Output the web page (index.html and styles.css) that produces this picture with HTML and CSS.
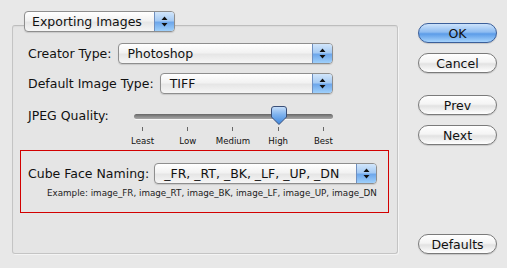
FILE: index.html
```html
<!DOCTYPE html>
<html>
<head>
<meta charset="UTF-8">
<title>Exporting Images</title>
<link rel="stylesheet" href="styles.css">
</head>
<body>
<div class="window">
  <div class="group">
    <div class="popup title-popup">
      <span class="popup-text">Exporting Images</span>
      <span class="popup-arrows"><svg width="7" height="11" viewBox="0 0 7 11"><path d="M3.5 0.5 L6.5 4 L0.5 4 Z M0.5 7 L6.5 7 L3.5 10.5 Z" fill="#111"/></svg></span>
    </div>

    <div class="row">
      <span class="label">Creator Type:</span>
      <div class="popup grow">
        <span class="popup-text">Photoshop</span>
        <span class="popup-arrows"><svg width="7" height="11" viewBox="0 0 7 11"><path d="M3.5 0.5 L6.5 4 L0.5 4 Z M0.5 7 L6.5 7 L3.5 10.5 Z" fill="#111"/></svg></span>
      </div>
    </div>

    <div class="row">
      <span class="label">Default Image Type:</span>
      <div class="popup grow">
        <span class="popup-text">TIFF</span>
        <span class="popup-arrows"><svg width="7" height="11" viewBox="0 0 7 11"><path d="M3.5 0.5 L6.5 4 L0.5 4 Z M0.5 7 L6.5 7 L3.5 10.5 Z" fill="#111"/></svg></span>
      </div>
    </div>

    <div class="slider-row">
      <span class="label">JPEG Quality:</span>
      <div class="slider">
        <div class="track"></div>
        <svg class="thumb" width="16" height="19" viewBox="0 0 16 19">
          <defs>
            <linearGradient id="tg" x1="0" y1="0" x2="0" y2="1">
              <stop offset="0" stop-color="#c9e0fa"/>
              <stop offset="0.45" stop-color="#7fb3ee"/>
              <stop offset="1" stop-color="#3f86dc"/>
            </linearGradient>
          </defs>
          <path d="M3 0.5 H13 Q15.5 0.5 15.5 3 V11 L8 18.5 L0.5 11 V3 Q0.5 0.5 3 0.5 Z" fill="url(#tg)" stroke="#3a4f78" stroke-width="1"/>
        </svg>
        <div class="ticks">
          <span class="tick"><i></i>Least</span>
          <span class="tick"><i></i>Low</span>
          <span class="tick"><i></i>Medium</span>
          <span class="tick"><i></i>High</span>
          <span class="tick"><i></i>Best</span>
        </div>
      </div>
    </div>

    <div class="highlight">
      <div class="row cube-row">
        <span class="label">Cube Face Naming:</span>
        <div class="popup grow">
          <span class="popup-text">_FR, _RT, _BK, _LF, _UP, _DN</span>
          <span class="popup-arrows"><svg width="7" height="11" viewBox="0 0 7 11"><path d="M3.5 0.5 L6.5 4 L0.5 4 Z M0.5 7 L6.5 7 L3.5 10.5 Z" fill="#111"/></svg></span>
        </div>
      </div>
      <p class="example">Example: image_FR, image_RT, image_BK, image_LF, image_UP, image_DN</p>
    </div>
  </div>

  <div class="buttons">
    <button class="btn default">OK</button>
    <button class="btn">Cancel</button>
    <button class="btn gap">Prev</button>
    <button class="btn">Next</button>
    <button class="btn bottom">Defaults</button>
  </div>
</div>
</body>
</html>
```

FILE: styles.css
```css
html, body {
    margin: 0;
    padding: 0;
}
body {
    width: 507px;
    height: 268px;
    background: #e8e8e8;
    font-family: "DejaVu Sans", "Liberation Sans", sans-serif;
    font-size: 12.5px;
    color: #111;
    overflow: hidden;
}
.window {
    display: flex;
    height: 268px;
}
.group {
    margin: 25px 0 0 12px;
    width: 386px;
    height: 229px;
    box-sizing: border-box;
    border: 1px solid #c4c4c4;
    border-top-color: #bdbdbd;
    border-radius: 3px;
    background: #e5e5e5;
    box-shadow: 1px 1px 0 #f4f4f4, inset 0 1px 1px rgba(0,0,0,0.04);
    padding: 0 0 0 15px;
}

/* popup menus */
.popup {
    display: flex;
    align-items: center;
    height: 21px;
    box-sizing: border-box;
    border: 1px solid #8e8e8e;
    border-radius: 4px;
    background: linear-gradient(#ffffff, #f2f2f2 45%, #e6e6e6 55%, #f6f6f6);
    box-shadow: 0 1px 1px rgba(0,0,0,0.12);
    overflow: hidden;
}
.popup-text {
    flex: 1;
    padding-left: 9px;
    white-space: nowrap;
}
.popup-arrows {
    display: flex;
    align-items: center;
    justify-content: center;
    width: 19px;
    height: 100%;
    border-left: 1px solid #6f8fbf;
    background: linear-gradient(#d2e6fb, #a6cbf4 45%, #6ea7eb 55%, #9fd0fb);
}
.title-popup {
    width: 151px;
    margin: -15px 0 0 -4px;
}
.title-popup .popup-text {
    padding-left: 7px;
}
.row {
    display: flex;
    align-items: center;
    gap: 6px;
    width: 305px;
}
.grow {
    flex: 1;
}
.group > .row:nth-of-type(2) {
    margin-top: 11px;
}
.group > .row + .row {
    margin-top: 9px;
}

/* slider */
.slider-row {
    display: flex;
    margin-top: 13px;
}
.slider-row .label {
    width: 92px;
    padding-top: 1px;
}
.slider {
    position: relative;
    width: 226px;
}
.track {
    margin: 7px 13px 0 14px;
    height: 5px;
    border-radius: 3px;
    background: linear-gradient(#666, #8a8a8a 50%, #a8a8a8);
    box-shadow: 0 1px 0 #f8f8f8;
}
.thumb {
    position: absolute;
    left: 151px;
    top: -1px;
}
.ticks {
    display: grid;
    grid-template-columns: repeat(5, 1fr);
    margin-top: 8px;
    font-size: 8.6px;
    color: #111;
}
.tick {
    display: flex;
    flex-direction: column;
    align-items: center;
    line-height: 11px;
}
.tick i {
    width: 1px;
    height: 4px;
    background: #666;
    margin-bottom: 5px;
}

/* highlighted cube face section */
.highlight {
    margin: 3px 0 0 -8px;
    width: 369px;
    height: 63px;
    box-sizing: border-box;
    border: 1px solid #d20000;
    padding: 12px 0 0 7px;
}
.cube-row {
    width: 349px;
    gap: 5px;
}
.example {
    margin: 4px 0 0 19px;
    font-size: 8.75px;
    color: #222;
}

/* buttons */
.buttons {
    display: flex;
    flex-direction: column;
    margin: 23px 0 0 20px;
}
.btn {
    width: 79px;
    height: 20px;
    margin-bottom: 10px;
    padding: 0;
    border: 1px solid #7a7a7a;
    border-radius: 10px;
    background: linear-gradient(#ffffff, #f4f4f4 45%, #e2e2e2 55%, #ffffff);
    box-shadow: 0 1px 1px rgba(0,0,0,0.15);
    font-family: inherit;
    font-size: 12.5px;
    color: #111;
}
.btn.default {
    border-color: #3b5f9a;
    background: linear-gradient(#cde3fb, #8ebcf1 45%, #5c9ce8 55%, #a6d3fc);
}
.btn.gap {
    margin-top: 12px;
}
.btn.bottom {
    margin-top: 79px;
}
```
